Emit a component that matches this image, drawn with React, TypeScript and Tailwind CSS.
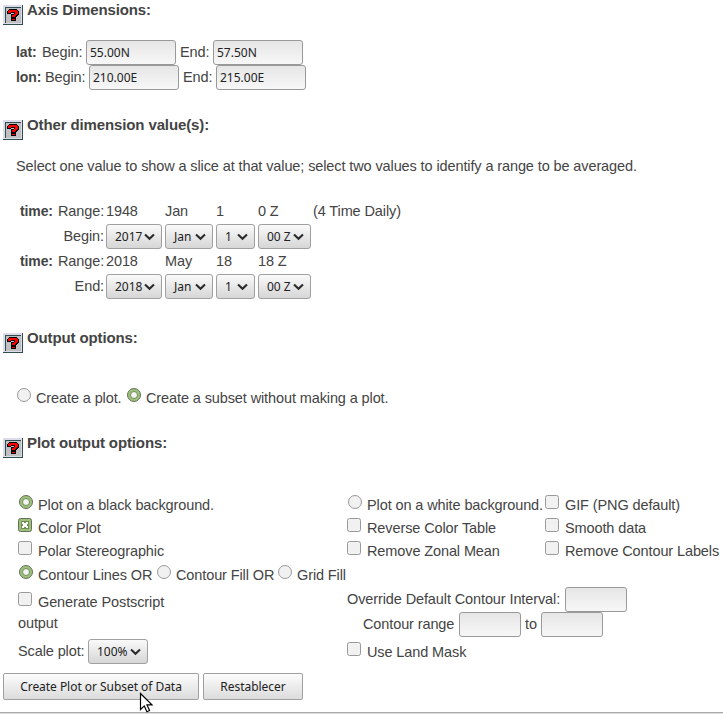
import type { ReactNode } from "react";

// K = outline, R = fill
const QUESTION = [
  "..KKKKKKKK..",
  ".KRRRRRRRRK.",
  "KRRRRRRRRRRK",
  "KRRRKKKKRRRK",
  "KKKK...KRRRK",
  "....KKKRRRKK",
  "....KRRRRKK.",
  "....KRRRKK..",
  "....KKKKK...",
  "....KKKKK...",
  "....KRRRK...",
  "....KKKKK...",
];

function HelpIcon() {
  return (
    <svg width="20" height="20" viewBox="0 0 20 20" shapeRendering="crispEdges" className="mt-[5px] shrink-0">
      <rect width="20" height="20" fill="#2f4f4f" />
      <rect width="19" height="19" fill="#dcdcec" />
      <rect x="2" y="2" width="16" height="16" fill="#2f4f4f" />
      <rect x="3" y="3" width="15" height="15" fill="#c0c0c0" />
      {QUESTION.flatMap((row, y) =>
        [...row].map((c, x) =>
          c === "." ? null : (
            <rect key={`${x}-${y}`} x={x + 4} y={y + 4} width="1" height="1" fill={c === "K" ? "#000" : "#f00"} />
          ),
        ),
      )}
    </svg>
  );
}

function Heading({ children, className }: { children: ReactNode; className?: string }) {
  return (
    <div className={`flex h-[25px] pl-[3px] ${className ?? ""}`}>
      <HelpIcon />
      <h2 className="ml-1 h-5 text-[15px] leading-5 font-bold tracking-[-0.12px] whitespace-nowrap">{children}</h2>
    </div>
  );
}

function Field({ value, className }: { value?: string; className: string }) {
  return (
    <input
      defaultValue={value}
      className={`h-[25px] shrink-0 rounded-[3px] border border-[#999] bg-linear-to-b from-[#e6e6e6] to-[#f7f7f7] px-[3px] font-['Noto_Sans',sans-serif] text-[12px] tracking-normal text-[#222] ${className}`}
    />
  );
}

function Pick({ value, className }: { value: string; className: string }) {
  return (
    <button
      className={`flex h-[25px] shrink-0 items-center justify-between rounded-[3px] border border-[#a0a0a0] bg-linear-to-b from-[#fafafa] to-[#d6d6d6] pr-[6px] pl-2 font-['Noto_Sans',sans-serif] text-[12px] tracking-normal whitespace-nowrap text-[#222] ${className}`}
    >
      <span>{value}</span>
      <svg width="11" height="8" viewBox="0 0 11 8" className="-ml-1 shrink-0">
        <path d="M1 1.5 5.5 5.7 10 1.5" fill="none" stroke="#2a2a2a" strokeWidth="2.1" />
      </svg>
    </button>
  );
}

function Radio({ on }: { on?: boolean }) {
  return (
    <svg width="14" height="14" viewBox="0 0 14 14" className="shrink-0">
      <circle cx="7" cy="7" r="6.5" fill={on ? "#9dc07d" : "#f1f1f1"} stroke={on ? "#667058" : "#999"} />
      {on && <circle cx="7" cy="7" r="3.5" fill="#f4f4f4" stroke="#6f8d55" />}
    </svg>
  );
}

function Check({ on }: { on?: boolean }) {
  return (
    <svg width="14" height="14" viewBox="0 0 14 14" className="shrink-0">
      <rect x=".5" y=".5" width="13" height="13" rx="2" fill={on ? "#9dc07d" : "#f1f1f1"} stroke={on ? "#667058" : "#999"} />
      {on && (
        <g shapeRendering="crispEdges">
          <rect x="3" y="3" width="8" height="8" fill="#6f8d55" />
          <path d="M4 4h2v1h2v-1h2v2h-1v2h1v2h-2v-1h-2v1h-2v-2h1v-2h-1z" fill="#fff" />
        </g>
      )}
    </svg>
  );
}

function Option({ radio, on, gap, className, children }: {
  radio?: boolean;
  on?: boolean;
  gap?: string;
  className?: string;
  children: ReactNode;
}) {
  return (
    <label className={`flex h-5 shrink-0 ${className ?? ""}`}>
      {radio ? <Radio on={on} /> : <Check on={on} />}
      <span className={gap ?? "ml-[6px]"}>{children}</span>
    </label>
  );
}

function TimeRows({ range, values, edge, note }: { range: string[]; values: string[]; edge: string; note?: string }) {
  return (
    <div className="h-[50px]">
      <div className="flex h-[23px] pl-5">
        <b className="w-[38px] shrink-0 text-[14px]">time:</b>
        <span className="w-[48px] shrink-0">Range:</span>
        <span className="w-[59px] shrink-0">{range[0]}</span>
        <span className="w-[51px] shrink-0">{range[1]}</span>
        <span className="w-[42px] shrink-0">{range[2]}</span>
        <span className="w-[55px] shrink-0">{range[3]}</span>
        <span>{note}</span>
      </div>
      <div className="flex items-center gap-[3px]">
        <span className="-mr-px w-[104px] shrink-0 pb-0.5 text-right">{edge}</span>
        <Pick value={values[0]} className="w-[56px]" />
        <Pick value={values[1]} className="w-[48px]" />
        <Pick value={values[2]} className="w-[39px]" />
        <Pick value={values[3]} className="w-[53px]" />
      </div>
    </div>
  );
}

function PushButton({ children, className }: { children: ReactNode; className: string }) {
  return (
    <button
      className={`h-[27px] rounded-[2px] border border-[#a0a0a0] bg-linear-to-b from-[#fcfcfc] to-[#dcdcdc] font-['Noto_Sans',sans-serif] text-[12px] tracking-[-0.04px] whitespace-nowrap text-[#222] ${className}`}
    >
      {children}
    </button>
  );
}

export default function App() {
  return (
    <div className="relative h-[714px] w-[723px] overflow-hidden bg-white font-['Liberation_Sans',Arial,sans-serif] text-[14.5px] leading-5 tracking-[-0.11px] whitespace-nowrap text-[#444]">
      <Heading>Axis Dimensions:</Heading>
      <div className="mt-[15px] flex h-[25px] items-center pl-4">
        <b className="w-[26px] pb-0.5 text-[14px]">lat:</b>
        <span className="w-[44px] pb-0.5">Begin:</span>
        <Field value="55.00N" className="w-[90px]" />
        <span className="ml-1 w-[33px] pb-0.5">End:</span>
        <Field value="57.50N" className="w-[90px]" />
      </div>
      <div className="flex h-[25px] items-center pl-4">
        <b className="w-[29px] pb-0.5 text-[14px]">lon:</b>
        <span className="w-[44px] pb-0.5">Begin:</span>
        <Field value="210.00E" className="w-[90px]" />
        <span className="ml-1 w-[33px] pb-0.5">End:</span>
        <Field value="215.00E" className="w-[90px]" />
      </div>

      <Heading className="mt-[25px]">Other dimension value(s):</Heading>
      <p className="mt-4 pl-4">
        Select one value to show a slice at that value; select two values to identify a range to be averaged.
      </p>
      <div className="mt-[25px]">
        <TimeRows range={["1948", "Jan", "1", "0 Z"]} note="(4 Time Daily)" edge="Begin:" values={["2017", "Jan", "1", "00 Z"]} />
        <TimeRows range={["2018", "May", "18", "18 Z"]} edge="End:" values={["2018", "Jan", "1", "00 Z"]} />
      </div>

      <Heading className="mt-[27px]">Output options:</Heading>
      <div className="mt-[35px] flex h-5 pl-[17px]">
        <Option radio gap="ml-[5px]" className="w-[110px]">Create a plot.</Option>
        <Option radio on gap="ml-[5px]">Create a subset without making a plot.</Option>
      </div>

      <Heading className="mt-[25px]">Plot output options:</Heading>
      <div className="mt-[37px] grid grid-cols-[329px_198px_1fr] gap-y-[3px] pl-[18px]">
        <Option radio on className="pl-px" gap="ml-[5px]">Plot on a black background.</Option>
        <Option radio className="pl-px" gap="ml-[5px]">Plot on a white background.</Option>
        <Option>GIF (PNG default)</Option>
        <Option on>Color Plot</Option>
        <Option>Reverse Color Table</Option>
        <Option>Smooth data</Option>
        <Option>Polar Stereographic</Option>
        <Option>Remove Zonal Mean</Option>
        <Option>Remove Contour Labels</Option>
      </div>
      <div className="mt-1 flex h-[22px] pl-[19px]">
        <Option radio on gap="ml-[5px]" className="w-[138px]">Contour Lines OR</Option>
        <Option radio gap="ml-[5px]" className="w-[121px]">Contour Fill OR</Option>
        <Option radio gap="ml-[5px]">Grid Fill</Option>
      </div>
      <div className="flex h-[86px] pl-[18px]">
        <div className="w-[329px] pt-[5px]">
          <Option>Generate Postscript</Option>
          <div className="mt-px h-5">output</div>
          <div className="mt-[6px] flex h-[25px] items-center">
            <span className="w-[70px] pb-0.5">Scale plot:</span>
            <Pick value="100%" className="w-[60px]" />
          </div>
        </div>
        <div>
          <div className="flex h-[25px] items-center">
            <span className="w-[218px] pb-0.5">Override Default Contour Interval:</span>
            <Field className="w-[62px]" />
          </div>
          <div className="flex h-[25px] items-center pl-4">
            <span className="w-[96px] pb-0.5">Contour range</span>
            <Field className="w-[62px]" />
            <span className="w-5 pb-0.5 pl-1">to</span>
            <Field className="w-[62px]" />
          </div>
          <Option className="mt-[5px]">Use Land Mask</Option>
        </div>
      </div>
      <div className="flex gap-1 pl-[3px]">
        <PushButton className="w-[196px]">Create Plot or Subset of Data</PushButton>
        <PushButton className="w-[100px]">Restablecer</PushButton>
      </div>
      <div className="mt-3 h-[2px] border-t border-[#aaa] bg-[#ddd]" />

      <svg width="14" height="22" viewBox="0 0 14 22" className="absolute top-[692px] left-[139px]">
        <path d="M1.5 1.5v16l3.8-3.6 2.6 5.8 2.7-1.2-2.6-5.6h5z" fill="#fff" stroke="#000" strokeWidth="1.2" />
      </svg>
    </div>
  );
}
